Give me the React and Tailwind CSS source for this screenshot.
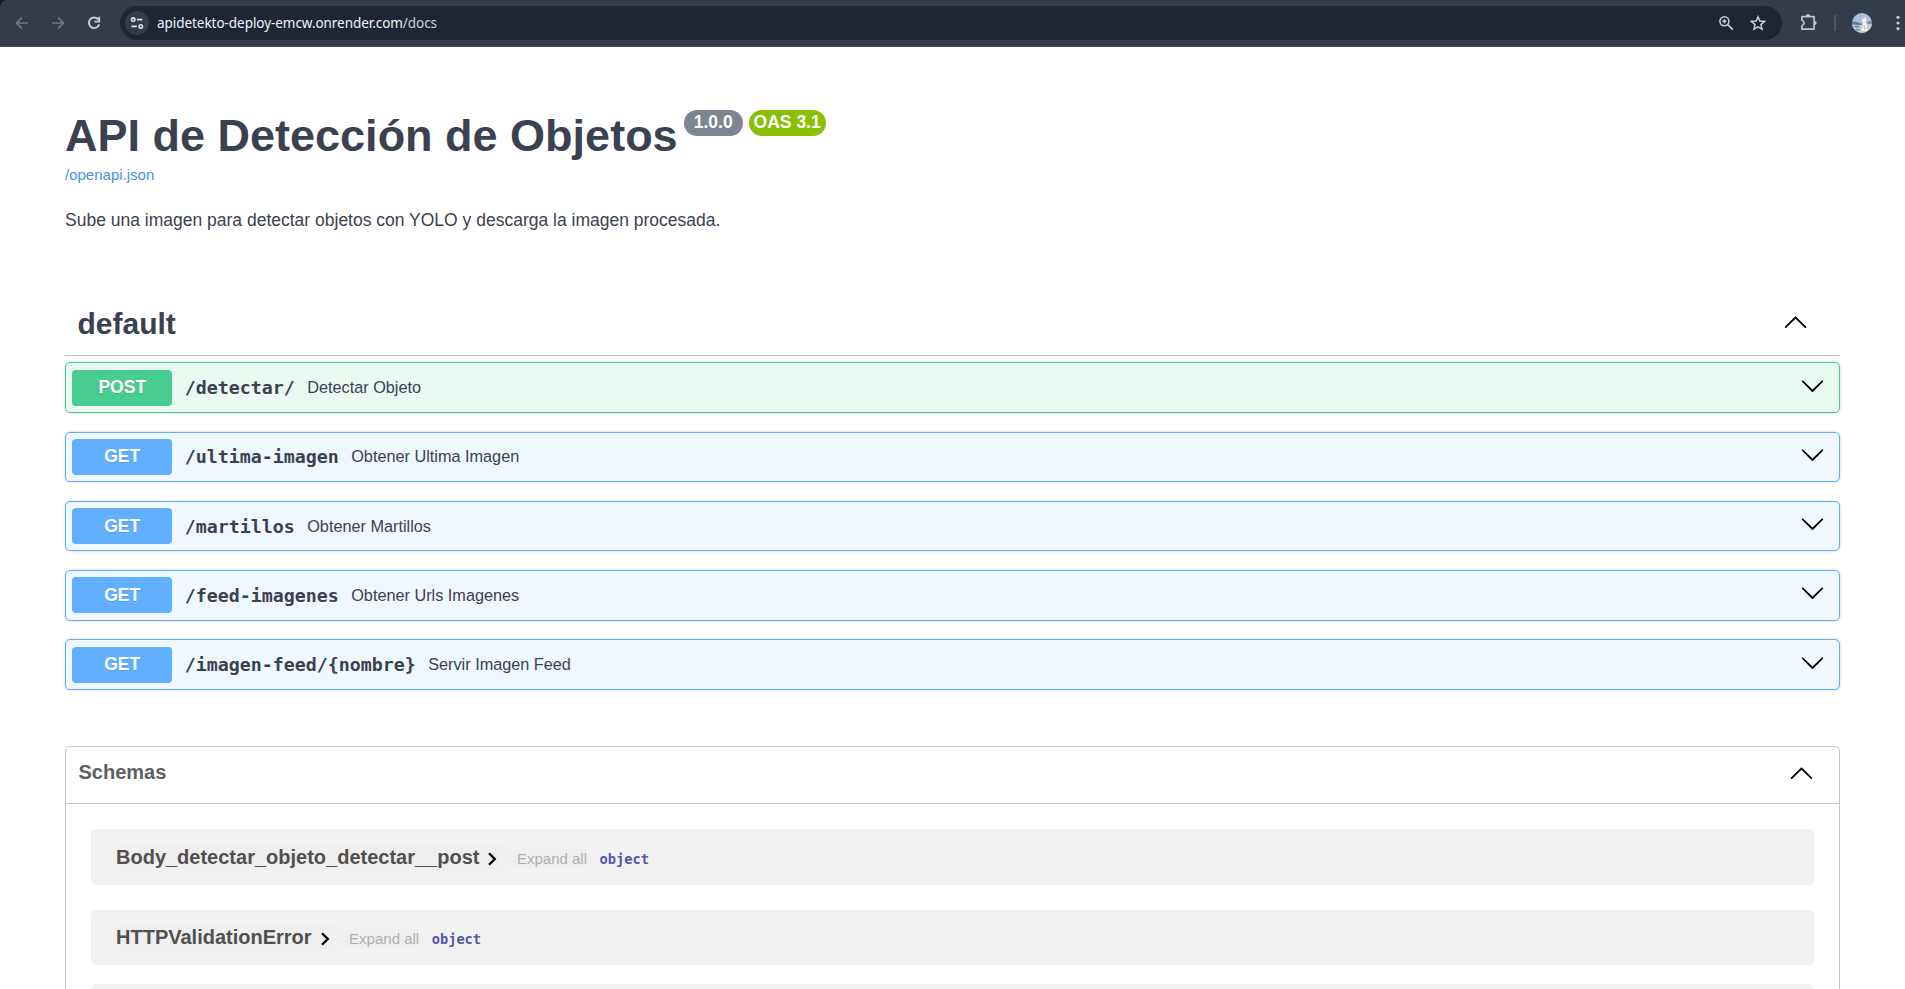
const operations = [
  { method: 'POST', path: '/detectar/', summary: 'Detectar Objeto' },
  { method: 'GET', path: '/ultima-imagen', summary: 'Obtener Ultima Imagen' },
  { method: 'GET', path: '/martillos', summary: 'Obtener Martillos' },
  { method: 'GET', path: '/feed-imagenes', summary: 'Obtener Urls Imagenes' },
  { method: 'GET', path: '/imagen-feed/{nombre}', summary: 'Servir Imagen Feed' },
];

const tones = {
  POST: { row: 'border-[#49cc90] bg-[#eaf9f2]', badge: 'bg-[#49cc90]' },
  GET: { row: 'border-[#61affe] bg-[#eff7ff]', badge: 'bg-[#61affe]' },
};

function ArrowUp({ className = '' }) {
  return (
    <svg className={`size-[25px] shrink-0 ${className}`} viewBox="0 0 20 20" aria-hidden="true">
      <path d="M17.418 14.908c.272.268.709.268.979 0s.271-.701 0-.969L10.489 6.109c-.27-.268-.707-.268-.979 0L1.602 13.939c-.27.268-.27.701 0 .969s.709.268.979 0L10 7.767l7.418 7.141z" />
    </svg>
  );
}

function ArrowDown({ className = '' }) {
  return (
    <svg className={`size-[25px] shrink-0 ${className}`} viewBox="0 0 20 20" aria-hidden="true">
      <path d="M17.418 6.109c.272-.268.709-.268.979 0s.271.701 0 .969l-7.908 7.83c-.27.268-.707.268-.979 0l-7.908-7.83c-.27-.268-.27-.701 0-.969s.709-.268.979 0L10 13.25l7.418-7.141z" />
    </svg>
  );
}

function BrowserBar() {
  return (
    <div className="bg-[#161e2d]">
      <header className="flex h-[47px] items-start rounded-tl-[8px] border-b border-[#4b4f57] bg-[#343c4c] pt-1.5">
        <div className="flex h-[34px] w-[120px] items-center pl-[14px]">
          <svg className="size-4" viewBox="0 0 16 16" fill="none" stroke="#6f7888" strokeWidth="1.7">
            <path d="M14 8H2.8M8 2.5 2.5 8 8 13.5" />
          </svg>
          <svg className="ml-5 size-4" viewBox="0 0 16 16" fill="none" stroke="#6f7888" strokeWidth="1.7">
            <path d="M2 8h11.2M8 2.5 13.5 8 8 13.5" />
          </svg>
          <svg className="ml-5 size-4" viewBox="0 0 16 16" fill="none" stroke="#c6cfe0" strokeWidth="1.9">
            <path d="M12.4 4.6A5.3 5.3 0 1 0 13.2 9.4" />
            <path d="M13.2 1.8v4.8H8.4" />
          </svg>
        </div>
        <div className="flex h-[34px] w-[1662px] items-center rounded-full bg-[#1e2636] pl-[5px]">
          <div className="flex size-6 items-center justify-center rounded-full bg-[#343c4c]">
            <svg className="size-[14px]" viewBox="0 0 14 14" fill="none" stroke="#dce1ea" strokeWidth="1.6">
              <circle cx="3.2" cy="3.6" r="1.7" />
              <path d="M7 3.6h5.4M1.4 10.4h5.4" />
              <circle cx="10.8" cy="10.4" r="1.7" />
            </svg>
          </div>
          <span className="ml-2 font-['Noto_Sans','Open_Sans',sans-serif] text-[13.5px] tracking-[-0.05px] text-[#f2f4f8]">
            apidetekto-deploy-emcw.onrender.com<span className="text-[#cdd1d9]">/docs</span>
          </span>
          <svg className="ml-auto size-4" viewBox="0 0 16 16" fill="none" stroke="#c8ccd4" strokeWidth="1.6">
            <circle cx="6.4" cy="6.2" r="4.5" />
            <path d="m9.8 9.6 5 5M4.4 6.2h4M6.4 4.2v4" />
          </svg>
          <svg className="mr-4 ml-[16px] size-4" viewBox="0 0 16 16" fill="none" stroke="#c8ccd4" strokeWidth="1.5">
            <path d="m8 1.8 1.8 4.3 4.7.4-3.6 3.1 1.1 4.6L8 11.8l-4 2.4 1.1-4.6L1.5 6.5l4.7-.4z" />
          </svg>
        </div>
        <div className="flex h-[34px] flex-1 items-center">
          <svg className="ml-[18px] size-[18px]" viewBox="0 0 18 18">
            <path d="M1.9 2.7h12.2v12.5H1.9v-3.5a2.8 2.8 0 0 0 0-5.4z" fill="none" stroke="#b9c3da" strokeWidth="1.7" strokeLinejoin="round" />
            <path d="M5.9 2.2a2.1 2.1 0 0 1 4.2 0zM14.6 6.9a2.1 2.1 0 0 1 0 4.2z" fill="#b9c3da" />
          </svg>
          <div className="ml-4 h-4 w-0.5 bg-[#4c566a]" />
          <svg className="ml-4 size-5" viewBox="0 0 20 20">
            <defs>
              <clipPath id="avatar"><circle cx="10" cy="10" r="10" /></clipPath>
            </defs>
            <g clipPath="url(#avatar)">
              <rect width="20" height="20" fill="#a9bfdb" />
              <path d="M0 8.5 5 9l5 2v2H0z" fill="#57799d" />
              <path d="M0 11.5 8 12l12-2v10H0z" fill="#c5cbd2" />
              <path d="m1 13 5-.5 2 1.5-3 1zM15 9l5-1v3h-4zM3 16h4l1 1.5H4z" fill="#74879c" />
              <path d="m10.3 5 1.5 1 2.2-2 .3 3.5-.6 2 1.6 3.5-.3 5H9.5l1-5 .8-3.5-1.3-1.5z" fill="#f4f3ee" />
              <path d="m11.4 12 .6 5h1l.6-4z" fill="#c9c6bf" />
            </g>
          </svg>
          <svg className="ml-6 h-4 w-1" viewBox="0 0 4 16" fill="#c3cad9">
            <circle cx="2" cy="2.3" r="1.6" />
            <circle cx="2" cy="8" r="1.6" />
            <circle cx="2" cy="13.7" r="1.6" />
          </svg>
        </div>
      </header>
    </div>
  );
}

function Operation({ method, path, summary }) {
  const tone = tones[method];
  return (
    <div className={`flex h-[50.5px] items-start rounded-[5px] border pt-[6.25px] pl-[6.25px] shadow-[0_0_3px_rgba(0,0,0,0.19)] ${tone.row}`}>
      <div className={`h-9 w-[100px] rounded-[4px] pt-[0.5px] text-center text-[17.5px] leading-[34px] font-bold text-white [text-shadow:0_1px_0_rgba(0,0,0,0.1)] ${tone.badge}`}>
        {method}
      </div>
      <div className="mt-[-0.5px] ml-[12.5px] text-[16.25px] leading-9 whitespace-nowrap">
        <span className="align-[-1px] font-['DejaVu_Sans_Mono',monospace] text-[18.27px] leading-none font-bold">{path}</span>
        <span className="ml-[12.5px]">{summary}</span>
      </div>
      <ArrowDown className="mt-[3px] mr-[14px] ml-auto" />
    </div>
  );
}

function Model({ name, className, arrowClass }) {
  return (
    <div className={`flex items-start rounded-[5px] bg-[#f1f1f1] pl-[25px] ${className}`}>
      <div className="flex h-[26px] items-center bg-[#efefef] pr-[12px] text-[20px] font-bold text-[#505050]">
        <span className="leading-[26px]">{name}</span>
        <svg className={`ml-[8px] h-[14px] w-[10px] ${arrowClass}`} viewBox="0 0 10 14" fill="none" stroke="#000" strokeWidth="2.3">
          <path d="m2 1.2 5.8 5.8L2 12.8" />
        </svg>
      </div>
      <span className="mt-[5px] bg-[#efefef] pl-[7.5px] text-[15px] leading-5 text-[#afaeae]">Expand all</span>
      <span className="mt-[5px] ml-[12.5px] font-['DejaVu_Sans_Mono',monospace] text-[13.7px] leading-5 font-bold text-[#5555aa]">object</span>
    </div>
  );
}

export default function App() {
  return (
    <div className="h-[989px] overflow-hidden bg-white font-['Liberation_Sans',Arial,sans-serif] text-[#3b4151]">
      <BrowserBar />
      <main className="mx-[65px]">
        <section className="h-[255px] pt-[63px]">
          <div className="flex items-start">
            <h1 className="mt-px text-[45px] leading-[50px] font-bold whitespace-nowrap">API de Detección de Objetos</h1>
            <span className="ml-[6px] h-[26px] w-[59px] rounded-full bg-[#7d8492] text-center text-[17.5px] leading-[24px] font-bold text-white">1.0.0</span>
            <span className="ml-1.5 h-[26px] w-[77px] rounded-full bg-[#89bf04] text-center text-[17.5px] leading-[24px] font-bold text-white">OAS 3.1</span>
          </div>
          <a className="mt-[5px] block text-[15px] leading-[18px] text-[#4990e2]">/openapi.json</a>
          <p className="mt-[26px] text-[17.5px] leading-5">Sube una imagen para detectar objetos con YOLO y descarga la imagen procesada.</p>
        </section>

        <section>
          <div className="flex h-[54px] items-start justify-between border-b border-[#c0c2c6] pl-[12.5px]">
            <h2 className="mt-[5px] text-[30px] leading-[34px] font-bold">default</h2>
            <ArrowUp className="mt-[7px] mr-[32px]" />
          </div>
          <div className="mt-[6.4px] flex flex-col gap-[18.75px]">
            {operations.map((op) => (
              <Operation key={op.path} {...op} />
            ))}
          </div>
        </section>

        <section className="mt-[56.1px] h-[400px] rounded-[5px] border border-[#c4c6cb]">
          <div className="flex h-[57px] items-start justify-between border-b border-[#c4c6cb] pl-[12.5px]">
            <h3 className="mt-[13px] text-[20px] leading-6 font-bold text-[#5f6062]">Schemas</h3>
            <ArrowUp className="mt-[13px] mr-[25px]" />
          </div>
          <div className="px-[25px] pt-[25px]">
            <Model name="Body_detectar_objeto_detectar__post" className="h-14 pt-[15px]" arrowClass="mt-[4px]" />
            <Model name="HTTPValidationError" className="mt-[25px] h-[55px] pt-[14px]" arrowClass="mt-[5px]" />
            <div className="mt-[19px] h-[55px] rounded-[5px] bg-[#f1f1f1]" />
          </div>
        </section>
      </main>
    </div>
  );
}
